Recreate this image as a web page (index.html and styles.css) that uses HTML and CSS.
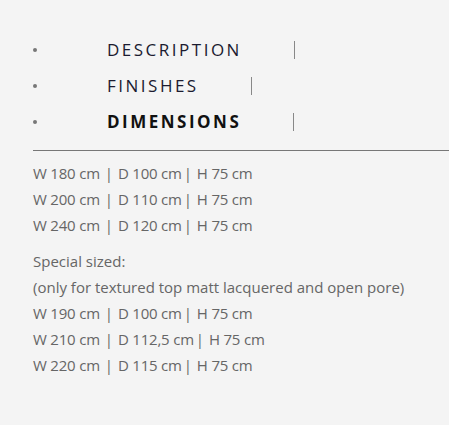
FILE: index.html
```html
<!DOCTYPE html>
<html>
<head>
<meta charset="utf-8">
<link rel="stylesheet" href="styles.css">
</head>
<body>
<div class="page">
  <ul class="tabs">
    <li class="tab"><span class="dot"></span><span class="label">DESCRIPTION</span></li>
    <li class="tab"><span class="dot"></span><span class="label">FINISHES</span></li>
    <li class="tab active"><span class="dot"></span><span class="label">DIMENSIONS</span></li>
  </ul>
  <div class="panel">
    <p class="line dim">W 180 cm<span class="sep">|</span>D 100 cm<span class="sep sep2">|</span>H 75 cm</p>
    <p class="line dim">W 200 cm<span class="sep">|</span>D 110 cm<span class="sep sep2">|</span>H 75 cm</p>
    <p class="line dim">W 240 cm<span class="sep">|</span>D 120 cm<span class="sep sep2">|</span>H 75 cm</p>
    <p class="line gap">Special sized:</p>
    <p class="line">(only for textured top matt lacquered and open pore)</p>
    <p class="line dim">W 190 cm<span class="sep">|</span>D 100 cm<span class="sep sep2">|</span>H 75 cm</p>
    <p class="line dim">W 210 cm<span class="sep">|</span>D 112,5 cm<span class="sep sep2">|</span>H 75 cm</p>
    <p class="line dim">W 220 cm<span class="sep">|</span>D 115 cm<span class="sep sep2">|</span>H 75 cm</p>
  </div>
</div>
</body>
</html>
```
FILE: styles.css
```css
html, body {
  margin: 0;
  padding: 0;
  background: #f4f4f4;
}
body {
  font-family: "Open Sans", "Liberation Sans", sans-serif;
}
.page {
  padding-top: 32px;
}
.tabs {
  list-style: none;
  margin: 0;
  padding: 0;
  display: flex;
  flex-direction: column;
}
.tab {
  display: flex;
  align-items: center;
  height: 36px;
  padding-left: 33px;
}
.dot {
  width: 4px;
  height: 4px;
  border-radius: 50%;
  background: #777;
  flex: none;
}
.label {
  margin-left: 70px;
  padding-right: 52px;
  border-right: 1px solid #888;
  font-size: 17px;
  letter-spacing: 2.5px;
  line-height: 18px;
  color: #1b1b30;
  font-weight: 400;
}
.active .label {
  font-weight: 700;
  color: #111;
}
.panel {
  margin-top: 10px;
  margin-left: 33px;
  border-top: 1px solid #777;
  padding-top: 9px;
  color: #666;
  font-size: 15px;
}
.line {
  margin: 0;
  line-height: 26px;
}
.dim {
  letter-spacing: -0.2px;
}
.sep {
  margin: 0 5px 0 5px;
}
.sep2 {
  margin-left: 2px;
}
.gap {
  margin-top: 10px;
}
```
